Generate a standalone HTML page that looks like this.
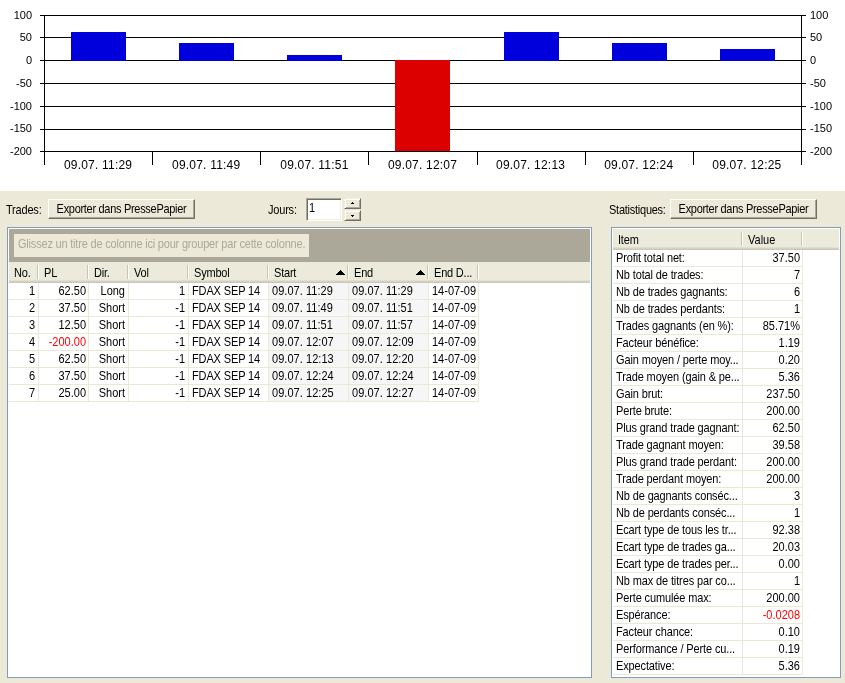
<!DOCTYPE html>
<html><head><meta charset="utf-8"><style>
*{box-sizing:border-box}
html,body{margin:0;padding:0}
body{width:845px;height:683px;background:#ece9d8;position:relative;overflow:hidden;font-family:"Liberation Sans",sans-serif;font-size:11px;color:#000}
div{position:absolute}
#root{left:0;top:0;width:845px;height:683px;will-change:transform;background:#ece9d8}
.yl{left:0;width:32px;text-align:right;font-size:11px;line-height:14px}
.yr{left:810px;font-size:11px;line-height:14px}
.cl{top:158px;width:100px;text-align:center;font-size:12px;line-height:14px;white-space:nowrap;letter-spacing:0.2px}
.lbl{line-height:13px;white-space:nowrap;letter-spacing:-0.2px;transform:scaleY(1.12);transform-origin:0 10px}
.btn{background:#ece9d8;border-top:1px solid #fff;border-left:1px solid #fff;border-right:1px solid #716f64;border-bottom:1px solid #716f64;box-shadow:inset -1px -1px 0 #aca899}
.btn span{position:absolute;left:0;right:0;top:3px;text-align:center;line-height:13px;white-space:nowrap;letter-spacing:-0.3px;transform:scaleY(1.12);transform-origin:0 10px}
.tb{background:#fff;border-top:1px solid #aca899;border-left:1px solid #aca899;border-right:1px solid #fff;border-bottom:1px solid #fff;box-shadow:inset 1px 1px 0 #716f64, inset -1px -1px 0 #f1efe2}
.tb span{position:absolute;left:2px;top:3px;line-height:13px;transform:scaleY(1.12);transform-origin:0 10px}
.spin{background:#ece9d8;border-top:1px solid #f1efe2;border-left:1px solid #f1efe2;border-right:1px solid #716f64;border-bottom:1px solid #716f64;box-shadow:inset 1px 1px 0 #fff, inset -1px -1px 0 #aca899}
.spin i{position:absolute;left:6px;width:0;height:0;border-left:2px solid transparent;border-right:2px solid transparent}
.spin i.up{top:3px;border-bottom:3px solid #000}
.spin i.dn{top:4px;border-top:3px solid #000}
.gbox{border:1px solid #7f9db9;box-shadow:inset 1px 1px 0 #fff, inset -1px -1px 0 #fff;background:#fff;width:auto}
.grp{background:#ece9d8}
.grp span{position:absolute;left:4px;top:4px;color:#aca899;line-height:13px;white-space:nowrap;letter-spacing:-0.196px;transform:scaleY(1.12);transform-origin:0 10px}
.hdr{height:21px;background:linear-gradient(to bottom,#ebeadb 0,#ebeadb 18px,#e2decd 18px,#e2decd 19px,#d6d2c2 19px,#d6d2c2 20px,#cbc7b8 20px)}
.htxt{line-height:13px;white-space:nowrap;letter-spacing:-0.2px;transform:scaleY(1.12);transform-origin:0 10px}
.hsep{width:2px;height:14px;background:linear-gradient(to right,#c7c5b2 0,#c7c5b2 1px,#fff 1px)}
.arr{width:0;height:0;border-left:4.5px solid transparent;border-right:4.5px solid transparent;border-bottom:5px solid #000}
.ct{line-height:16px;white-space:nowrap;letter-spacing:-0.13px;transform:scaleY(1.12);transform-origin:0 12px}
.ct.r{text-align:right;letter-spacing:0}
.red{color:#ff0000}
.hl{height:1px;background:#ebe8d7}
.vl{width:1px;background:#ebe8d7}
</style></head><body>
<div id="root">
<svg width="845" height="191" viewBox="0 0 845 191" style="position:absolute;left:0;top:0;display:block" shape-rendering="crispEdges">
<rect x="0" y="0" width="845" height="191" fill="#fff"/>
<rect x="40" y="15" width="766" height="1" fill="#000"/>
<rect x="40" y="37" width="766" height="1" fill="#000"/>
<rect x="40" y="60" width="766" height="1" fill="#000"/>
<rect x="40" y="83" width="766" height="1" fill="#000"/>
<rect x="40" y="106" width="766" height="1" fill="#000"/>
<rect x="40" y="129" width="766" height="1" fill="#000"/>
<rect x="40" y="151" width="766" height="1" fill="#000"/>
<rect x="44" y="15" width="1" height="150" fill="#000"/>
<rect x="801" y="15" width="1" height="150" fill="#000"/>
<rect x="152" y="151" width="1" height="14" fill="#000"/>
<rect x="260" y="151" width="1" height="14" fill="#000"/>
<rect x="368" y="151" width="1" height="14" fill="#000"/>
<rect x="477" y="151" width="1" height="14" fill="#000"/>
<rect x="585" y="151" width="1" height="14" fill="#000"/>
<rect x="693" y="151" width="1" height="14" fill="#000"/>
<rect x="71" y="32" width="55" height="29" fill="#0000dd"/>
<rect x="179" y="43" width="55" height="18" fill="#0000dd"/>
<rect x="287" y="55" width="55" height="6" fill="#0000dd"/>
<rect x="395" y="60" width="55" height="91" fill="#dd0000"/>
<rect x="504" y="32" width="55" height="29" fill="#0000dd"/>
<rect x="612" y="43" width="55" height="18" fill="#0000dd"/>
<rect x="720" y="49" width="55" height="12" fill="#0000dd"/>
</svg>
<div class="yl" style="top:8px">100</div>
<div class="yr" style="top:8px">100</div>
<div class="yl" style="top:30px">50</div>
<div class="yr" style="top:30px">50</div>
<div class="yl" style="top:53px">0</div>
<div class="yr" style="top:53px">0</div>
<div class="yl" style="top:76px">-50</div>
<div class="yr" style="top:76px">-50</div>
<div class="yl" style="top:99px">-100</div>
<div class="yr" style="top:99px">-100</div>
<div class="yl" style="top:121px">-150</div>
<div class="yr" style="top:121px">-150</div>
<div class="yl" style="top:144px">-200</div>
<div class="yr" style="top:144px">-200</div>
<div class="cl" style="left:48.1px">09.07. 11:29</div>
<div class="cl" style="left:156.2px">09.07. 11:49</div>
<div class="cl" style="left:264.4px">09.07. 11:51</div>
<div class="cl" style="left:372.5px">09.07. 12:07</div>
<div class="cl" style="left:480.6px">09.07. 12:13</div>
<div class="cl" style="left:588.8px">09.07. 12:24</div>
<div class="cl" style="left:696.9px">09.07. 12:25</div>
<div class="lbl" style="left:6px;top:204px">Trades:</div>
<div class="btn" style="left:48px;top:199px;width:147px;height:20px"><span>Exporter dans PressePapier</span></div>
<div class="lbl" style="left:268px;top:204px">Jours:</div>
<div class="tb" style="left:306px;top:198px;width:36px;height:23px"><span>1</span></div>
<div class="spin" style="left:344px;top:198px;width:17px;height:11px"><svg width="3" height="2" style="position:absolute;left:6px;top:3px" shape-rendering="crispEdges"><rect x="1" y="0" width="1" height="1"/><rect x="0" y="1" width="3" height="1"/></svg></div>
<div class="spin" style="left:344px;top:210px;width:17px;height:11px"><svg width="3" height="2" style="position:absolute;left:6px;top:4px" shape-rendering="crispEdges"><rect x="0" y="0" width="3" height="1"/><rect x="1" y="1" width="1" height="1"/></svg></div>
<div class="lbl" style="left:609px;top:204px;letter-spacing:-0.25px">Statistiques:</div>
<div class="btn" style="left:670px;top:199px;width:147px;height:20px"><span>Exporter dans PressePapier</span></div>
<div class="gbox" style="left:7px;top:227px;width:585px;height:451px"></div>
<div style="position:absolute;left:9px;top:229px;width:581px;height:33px;background:#aca899"></div>
<div class="grp" style="left:14px;top:234px;width:295px;height:23px"><span>Glissez un titre de colonne ici pour grouper par cette colonne.</span></div>
<div class="hdr" style="left:9px;top:262px;width:581px"></div>
<div class="htxt" style="left:14px;top:267px">No.</div>
<div class="hsep" style="left:37px;top:265px"></div>
<div class="htxt" style="left:44px;top:267px">PL</div>
<div class="hsep" style="left:87px;top:265px"></div>
<div class="htxt" style="left:94px;top:267px">Dir.</div>
<div class="hsep" style="left:127px;top:265px"></div>
<div class="htxt" style="left:134px;top:267px">Vol</div>
<div class="hsep" style="left:187px;top:265px"></div>
<div class="htxt" style="left:194px;top:267px">Symbol</div>
<div class="hsep" style="left:267px;top:265px"></div>
<div class="htxt" style="left:274px;top:267px">Start</div>
<div class="hsep" style="left:347px;top:265px"></div>
<div class="htxt" style="left:354px;top:267px">End</div>
<div class="hsep" style="left:427px;top:265px"></div>
<div class="htxt" style="left:434px;top:267px">End D...</div>
<div class="hsep" style="left:477px;top:265px"></div>
<svg width="9" height="5" style="position:absolute;left:336px;top:270px" shape-rendering="crispEdges"><rect x="4" y="0" width="1" height="1"/><rect x="3" y="1" width="3" height="1"/><rect x="2" y="2" width="5" height="1"/><rect x="1" y="3" width="7" height="1"/><rect x="0" y="4" width="9" height="1"/></svg>
<svg width="9" height="5" style="position:absolute;left:416px;top:270px" shape-rendering="crispEdges"><rect x="4" y="0" width="1" height="1"/><rect x="3" y="1" width="3" height="1"/><rect x="2" y="2" width="5" height="1"/><rect x="1" y="3" width="7" height="1"/><rect x="0" y="4" width="9" height="1"/></svg>
<div style="position:absolute;left:269px;top:283px;width:159px;height:119px;background:#f6f6f6"></div>
<div class="hl" style="left:9px;top:299px;width:470px"></div>
<div class="ct r" style="left:9px;top:283px;width:26px">1</div>
<div class="ct r" style="left:39px;top:283px;width:47px">62.50</div>
<div class="ct r" style="left:89px;top:283px;width:36px">Long</div>
<div class="ct r" style="left:129px;top:283px;width:56px">1</div>
<div class="ct" style="left:192px;top:283px">FDAX SEP 14</div>
<div class="ct" style="left:272px;top:283px;letter-spacing:0.05px">09.07. 11:29</div>
<div class="ct" style="left:352px;top:283px;letter-spacing:0.05px">09.07. 11:29</div>
<div class="ct" style="left:432px;top:283px;letter-spacing:0">14-07-09</div>
<div class="hl" style="left:9px;top:316px;width:470px"></div>
<div class="ct r" style="left:9px;top:300px;width:26px">2</div>
<div class="ct r" style="left:39px;top:300px;width:47px">37.50</div>
<div class="ct r" style="left:89px;top:300px;width:36px">Short</div>
<div class="ct r" style="left:129px;top:300px;width:56px">-1</div>
<div class="ct" style="left:192px;top:300px">FDAX SEP 14</div>
<div class="ct" style="left:272px;top:300px;letter-spacing:0.05px">09.07. 11:49</div>
<div class="ct" style="left:352px;top:300px;letter-spacing:0.05px">09.07. 11:51</div>
<div class="ct" style="left:432px;top:300px;letter-spacing:0">14-07-09</div>
<div class="hl" style="left:9px;top:333px;width:470px"></div>
<div class="ct r" style="left:9px;top:317px;width:26px">3</div>
<div class="ct r" style="left:39px;top:317px;width:47px">12.50</div>
<div class="ct r" style="left:89px;top:317px;width:36px">Short</div>
<div class="ct r" style="left:129px;top:317px;width:56px">-1</div>
<div class="ct" style="left:192px;top:317px">FDAX SEP 14</div>
<div class="ct" style="left:272px;top:317px;letter-spacing:0.05px">09.07. 11:51</div>
<div class="ct" style="left:352px;top:317px;letter-spacing:0.05px">09.07. 11:57</div>
<div class="ct" style="left:432px;top:317px;letter-spacing:0">14-07-09</div>
<div class="hl" style="left:9px;top:350px;width:470px"></div>
<div class="ct r" style="left:9px;top:334px;width:26px">4</div>
<div class="ct r red" style="left:39px;top:334px;width:47px">-200.00</div>
<div class="ct r" style="left:89px;top:334px;width:36px">Short</div>
<div class="ct r" style="left:129px;top:334px;width:56px">-1</div>
<div class="ct" style="left:192px;top:334px">FDAX SEP 14</div>
<div class="ct" style="left:272px;top:334px;letter-spacing:0.05px">09.07. 12:07</div>
<div class="ct" style="left:352px;top:334px;letter-spacing:0.05px">09.07. 12:09</div>
<div class="ct" style="left:432px;top:334px;letter-spacing:0">14-07-09</div>
<div class="hl" style="left:9px;top:367px;width:470px"></div>
<div class="ct r" style="left:9px;top:351px;width:26px">5</div>
<div class="ct r" style="left:39px;top:351px;width:47px">62.50</div>
<div class="ct r" style="left:89px;top:351px;width:36px">Short</div>
<div class="ct r" style="left:129px;top:351px;width:56px">-1</div>
<div class="ct" style="left:192px;top:351px">FDAX SEP 14</div>
<div class="ct" style="left:272px;top:351px;letter-spacing:0.05px">09.07. 12:13</div>
<div class="ct" style="left:352px;top:351px;letter-spacing:0.05px">09.07. 12:20</div>
<div class="ct" style="left:432px;top:351px;letter-spacing:0">14-07-09</div>
<div class="hl" style="left:9px;top:384px;width:470px"></div>
<div class="ct r" style="left:9px;top:368px;width:26px">6</div>
<div class="ct r" style="left:39px;top:368px;width:47px">37.50</div>
<div class="ct r" style="left:89px;top:368px;width:36px">Short</div>
<div class="ct r" style="left:129px;top:368px;width:56px">-1</div>
<div class="ct" style="left:192px;top:368px">FDAX SEP 14</div>
<div class="ct" style="left:272px;top:368px;letter-spacing:0.05px">09.07. 12:24</div>
<div class="ct" style="left:352px;top:368px;letter-spacing:0.05px">09.07. 12:24</div>
<div class="ct" style="left:432px;top:368px;letter-spacing:0">14-07-09</div>
<div class="hl" style="left:9px;top:401px;width:470px"></div>
<div class="ct r" style="left:9px;top:385px;width:26px">7</div>
<div class="ct r" style="left:39px;top:385px;width:47px">25.00</div>
<div class="ct r" style="left:89px;top:385px;width:36px">Short</div>
<div class="ct r" style="left:129px;top:385px;width:56px">-1</div>
<div class="ct" style="left:192px;top:385px">FDAX SEP 14</div>
<div class="ct" style="left:272px;top:385px;letter-spacing:0.05px">09.07. 12:25</div>
<div class="ct" style="left:352px;top:385px;letter-spacing:0.05px">09.07. 12:27</div>
<div class="ct" style="left:432px;top:385px;letter-spacing:0">14-07-09</div>
<div class="vl" style="left:38px;top:283px;height:119px"></div>
<div class="vl" style="left:88px;top:283px;height:119px"></div>
<div class="vl" style="left:128px;top:283px;height:119px"></div>
<div class="vl" style="left:188px;top:283px;height:119px"></div>
<div class="vl" style="left:268px;top:283px;height:119px"></div>
<div class="vl" style="left:348px;top:283px;height:119px"></div>
<div class="vl" style="left:428px;top:283px;height:119px"></div>
<div class="vl" style="left:478px;top:283px;height:119px"></div>
<div class="gbox" style="left:611px;top:227px;width:230px;height:451px"></div>
<div class="hdr" style="left:613px;top:229px;width:226px"></div>
<div class="htxt" style="left:618px;top:234px">Item</div>
<div class="hsep" style="left:741px;top:232px"></div>
<div class="htxt" style="left:748px;top:234px;letter-spacing:0">Value</div>
<div class="hsep" style="left:801px;top:232px"></div>
<div class="hl" style="left:613px;top:266px;width:190px"></div>
<div class="ct" style="left:616px;top:250px">Profit total net:</div>
<div class="ct r" style="left:743px;top:250px;width:57px">37.50</div>
<div class="hl" style="left:613px;top:283px;width:190px"></div>
<div class="ct" style="left:616px;top:267px">Nb total de trades:</div>
<div class="ct r" style="left:743px;top:267px;width:57px">7</div>
<div class="hl" style="left:613px;top:300px;width:190px"></div>
<div class="ct" style="left:616px;top:284px">Nb de trades gagnants:</div>
<div class="ct r" style="left:743px;top:284px;width:57px">6</div>
<div class="hl" style="left:613px;top:317px;width:190px"></div>
<div class="ct" style="left:616px;top:301px">Nb de trades perdants:</div>
<div class="ct r" style="left:743px;top:301px;width:57px">1</div>
<div class="hl" style="left:613px;top:334px;width:190px"></div>
<div class="ct" style="left:616px;top:318px">Trades gagnants (en %):</div>
<div class="ct r" style="left:743px;top:318px;width:57px">85.71%</div>
<div class="hl" style="left:613px;top:351px;width:190px"></div>
<div class="ct" style="left:616px;top:335px">Facteur bénéfice:</div>
<div class="ct r" style="left:743px;top:335px;width:57px">1.19</div>
<div class="hl" style="left:613px;top:368px;width:190px"></div>
<div class="ct" style="left:616px;top:352px">Gain moyen / perte moy...</div>
<div class="ct r" style="left:743px;top:352px;width:57px">0.20</div>
<div class="hl" style="left:613px;top:385px;width:190px"></div>
<div class="ct" style="left:616px;top:369px">Trade moyen (gain &amp; pe...</div>
<div class="ct r" style="left:743px;top:369px;width:57px">5.36</div>
<div class="hl" style="left:613px;top:402px;width:190px"></div>
<div class="ct" style="left:616px;top:386px">Gain brut:</div>
<div class="ct r" style="left:743px;top:386px;width:57px">237.50</div>
<div class="hl" style="left:613px;top:419px;width:190px"></div>
<div class="ct" style="left:616px;top:403px">Perte brute:</div>
<div class="ct r" style="left:743px;top:403px;width:57px">200.00</div>
<div class="hl" style="left:613px;top:436px;width:190px"></div>
<div class="ct" style="left:616px;top:420px">Plus grand trade gagnant:</div>
<div class="ct r" style="left:743px;top:420px;width:57px">62.50</div>
<div class="hl" style="left:613px;top:453px;width:190px"></div>
<div class="ct" style="left:616px;top:437px">Trade gagnant moyen:</div>
<div class="ct r" style="left:743px;top:437px;width:57px">39.58</div>
<div class="hl" style="left:613px;top:470px;width:190px"></div>
<div class="ct" style="left:616px;top:454px">Plus grand trade perdant:</div>
<div class="ct r" style="left:743px;top:454px;width:57px">200.00</div>
<div class="hl" style="left:613px;top:487px;width:190px"></div>
<div class="ct" style="left:616px;top:471px">Trade perdant moyen:</div>
<div class="ct r" style="left:743px;top:471px;width:57px">200.00</div>
<div class="hl" style="left:613px;top:504px;width:190px"></div>
<div class="ct" style="left:616px;top:488px">Nb de gagnants conséc...</div>
<div class="ct r" style="left:743px;top:488px;width:57px">3</div>
<div class="hl" style="left:613px;top:521px;width:190px"></div>
<div class="ct" style="left:616px;top:505px">Nb de perdants conséc...</div>
<div class="ct r" style="left:743px;top:505px;width:57px">1</div>
<div class="hl" style="left:613px;top:538px;width:190px"></div>
<div class="ct" style="left:616px;top:522px">Ecart type de tous les tr...</div>
<div class="ct r" style="left:743px;top:522px;width:57px">92.38</div>
<div class="hl" style="left:613px;top:555px;width:190px"></div>
<div class="ct" style="left:616px;top:539px">Ecart type de trades ga...</div>
<div class="ct r" style="left:743px;top:539px;width:57px">20.03</div>
<div class="hl" style="left:613px;top:572px;width:190px"></div>
<div class="ct" style="left:616px;top:556px">Ecart type de trades per...</div>
<div class="ct r" style="left:743px;top:556px;width:57px">0.00</div>
<div class="hl" style="left:613px;top:589px;width:190px"></div>
<div class="ct" style="left:616px;top:573px">Nb max de titres par co...</div>
<div class="ct r" style="left:743px;top:573px;width:57px">1</div>
<div class="hl" style="left:613px;top:606px;width:190px"></div>
<div class="ct" style="left:616px;top:590px">Perte cumulée max:</div>
<div class="ct r" style="left:743px;top:590px;width:57px">200.00</div>
<div class="hl" style="left:613px;top:623px;width:190px"></div>
<div class="ct" style="left:616px;top:607px">Espérance:</div>
<div class="ct r red" style="left:743px;top:607px;width:57px">-0.0208</div>
<div class="hl" style="left:613px;top:640px;width:190px"></div>
<div class="ct" style="left:616px;top:624px">Facteur chance:</div>
<div class="ct r" style="left:743px;top:624px;width:57px">0.10</div>
<div class="hl" style="left:613px;top:657px;width:190px"></div>
<div class="ct" style="left:616px;top:641px">Performance / Perte cu...</div>
<div class="ct r" style="left:743px;top:641px;width:57px">0.19</div>
<div class="hl" style="left:613px;top:674px;width:190px"></div>
<div class="ct" style="left:616px;top:658px">Expectative:</div>
<div class="ct r" style="left:743px;top:658px;width:57px">5.36</div>
<div class="vl" style="left:742px;top:250px;height:425px"></div>
<div class="vl" style="left:802px;top:250px;height:425px"></div>
</div>
</body></html>
